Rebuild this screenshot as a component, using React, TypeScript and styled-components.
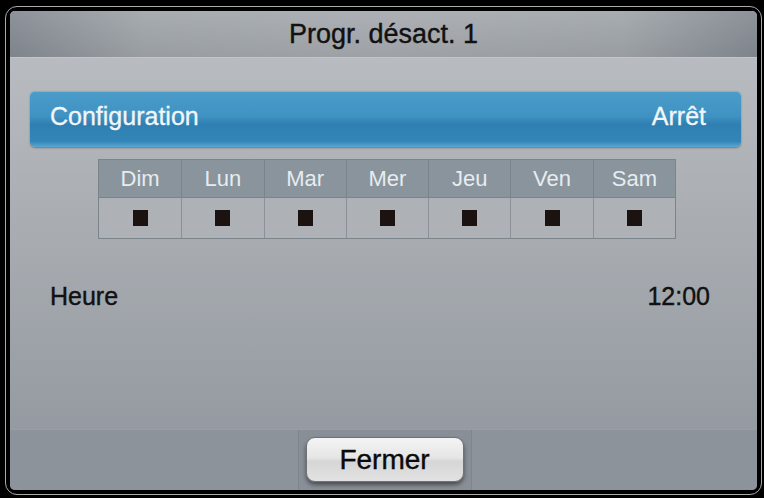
import React from 'react'
import styled, { createGlobalStyle } from 'styled-components'

const GlobalStyle = createGlobalStyle`
    html, body {
        margin: 0;
        padding: 0;
        background: #000;
        font-family: "Liberation Sans", Arial, sans-serif;
    }
`

const Frame = styled.div`
    box-sizing: border-box;
    width: 757px;
    height: 489px;
    margin: 6px 0 0 5px;
    padding: 4px;
    border: 1.5px solid #a9abad;
    border-radius: 12px;
    background: #000;
`

const Panel = styled.div`
    display: flex;
    flex-direction: column;
    height: 100%;
    border-radius: 5px;
    overflow: hidden;
    background: linear-gradient(to bottom, #bcbfc3 0%, #a9adb2 45%, #8f959c 100%);
`

const Header = styled.div`
    display: flex;
    align-items: center;
    justify-content: center;
    height: 46px;
    flex-shrink: 0;
    border-bottom: 1px solid #c3c6c9;
    background:
        linear-gradient(to bottom, rgba(255, 255, 255, 0.06), rgba(0, 0, 0, 0.06)),
        linear-gradient(to right, #868c93 0%, #a2a7ac 18%, #a8acb1 50%, #a2a7ac 82%, #868c93 100%);
`

const Title = styled.h1`
    margin: 0;
    font-size: 27px;
    font-weight: normal;
    color: #111;
    -webkit-text-stroke: 0.4px #111;
`

const Body = styled.div`
    flex: 1;
    display: flex;
    flex-direction: column;
    padding: 33px 16px 0 20px;
`

const ConfigBar = styled.div`
    display: flex;
    align-items: center;
    justify-content: space-between;
    height: 56px;
    padding: 0 35px 5px 20px;
    border-radius: 5px;
    box-sizing: border-box;
    color: #f2f6f9;
    font-size: 25px;
    -webkit-text-stroke: 0.3px #f2f6f9;
    background: linear-gradient(to bottom, #4b9cc9 0%, #3f92c2 45%, #2f7fb2 60%, #3386b8 90%, #5aa7d2 100%);
    box-shadow: 0 1px 2px rgba(0, 0, 0, 0.35), inset 0 1px 0 rgba(255, 255, 255, 0.25);
`

const DayTable = styled.div`
    display: grid;
    grid-template-columns: repeat(7, 1fr);
    width: 576px;
    margin: 12px 0 0 68px;
    border: 1px solid #7b838b;
`

const DayHead = styled.div`
    display: flex;
    align-items: center;
    justify-content: center;
    height: 37px;
    font-size: 22px;
    color: #e6ecf0;
    background: #8a949c;
    border-bottom: 1px solid #7b838b;
    border-left: ${p => (p.$first ? 'none' : '1px solid #7b838b')};
`

const DayCell = styled.div`
    display: flex;
    align-items: center;
    justify-content: center;
    height: 40px;
    background: #aeb2b7;
    border-left: ${p => (p.$first ? 'none' : '1px solid #8a9198')};
`

const Box = styled.span`
    width: 15px;
    height: 16px;
    background: #1c1210;
`

const InfoRow = styled.div`
    display: flex;
    align-items: center;
    justify-content: space-between;
    margin-top: 43px;
    padding: 0 31px 0 20px;
    font-size: 25px;
    color: #111;
    -webkit-text-stroke: 0.4px #111;
`

const Footer = styled.div`
    display: flex;
    justify-content: center;
    height: 60px;
    flex-shrink: 0;
    border-top: 1px solid rgba(255, 255, 255, 0.1);
    background: #8d939b;
`

const ButtonWell = styled.div`
    display: flex;
    justify-content: center;
    align-items: flex-start;
    width: 174px;
    padding-top: 7px;
    box-sizing: border-box;
    margin-left: 2px;
    background: #898f97;
    border-left: 1px solid #7f858d;
    border-right: 1px solid #7f858d;
`

const CloseButton = styled.button`
    width: 158px;
    height: 45px;
    border: 1px solid #6e7378;
    border-radius: 9px;
    font-family: "Liberation Sans", Arial, sans-serif;
    font-size: 28px;
    color: #0a0a0a;
    -webkit-text-stroke: 0.4px #0a0a0a;
    background: linear-gradient(to bottom, #f4f4f4 0%, #e6e6e6 45%, #d6d6d6 55%, #e2e2e2 100%);
    box-shadow: 0 3px 4px rgba(0, 0, 0, 0.45);
    cursor: pointer;
`

const days = ['Dim', 'Lun', 'Mar', 'Mer', 'Jeu', 'Ven', 'Sam']

const App = () => {
    return (
        <>
            <GlobalStyle />
            <Frame>
                <Panel>
                    <Header>
                        <Title>Progr. désact. 1</Title>
                    </Header>
                    <Body>
                        <ConfigBar>
                            <span>Configuration</span>
                            <span>Arrêt</span>
                        </ConfigBar>
                        <DayTable>
                            {days.map((d, i) => (
                                <DayHead key={d} $first={i === 0}>{d}</DayHead>
                            ))}
                            {days.map((d, i) => (
                                <DayCell key={d} $first={i === 0}>
                                    <Box />
                                </DayCell>
                            ))}
                        </DayTable>
                        <InfoRow>
                            <span>Heure</span>
                            <span>12:00</span>
                        </InfoRow>
                    </Body>
                    <Footer>
                        <ButtonWell>
                            <CloseButton>Fermer</CloseButton>
                        </ButtonWell>
                    </Footer>
                </Panel>
            </Frame>
        </>
    )
}

export default App
